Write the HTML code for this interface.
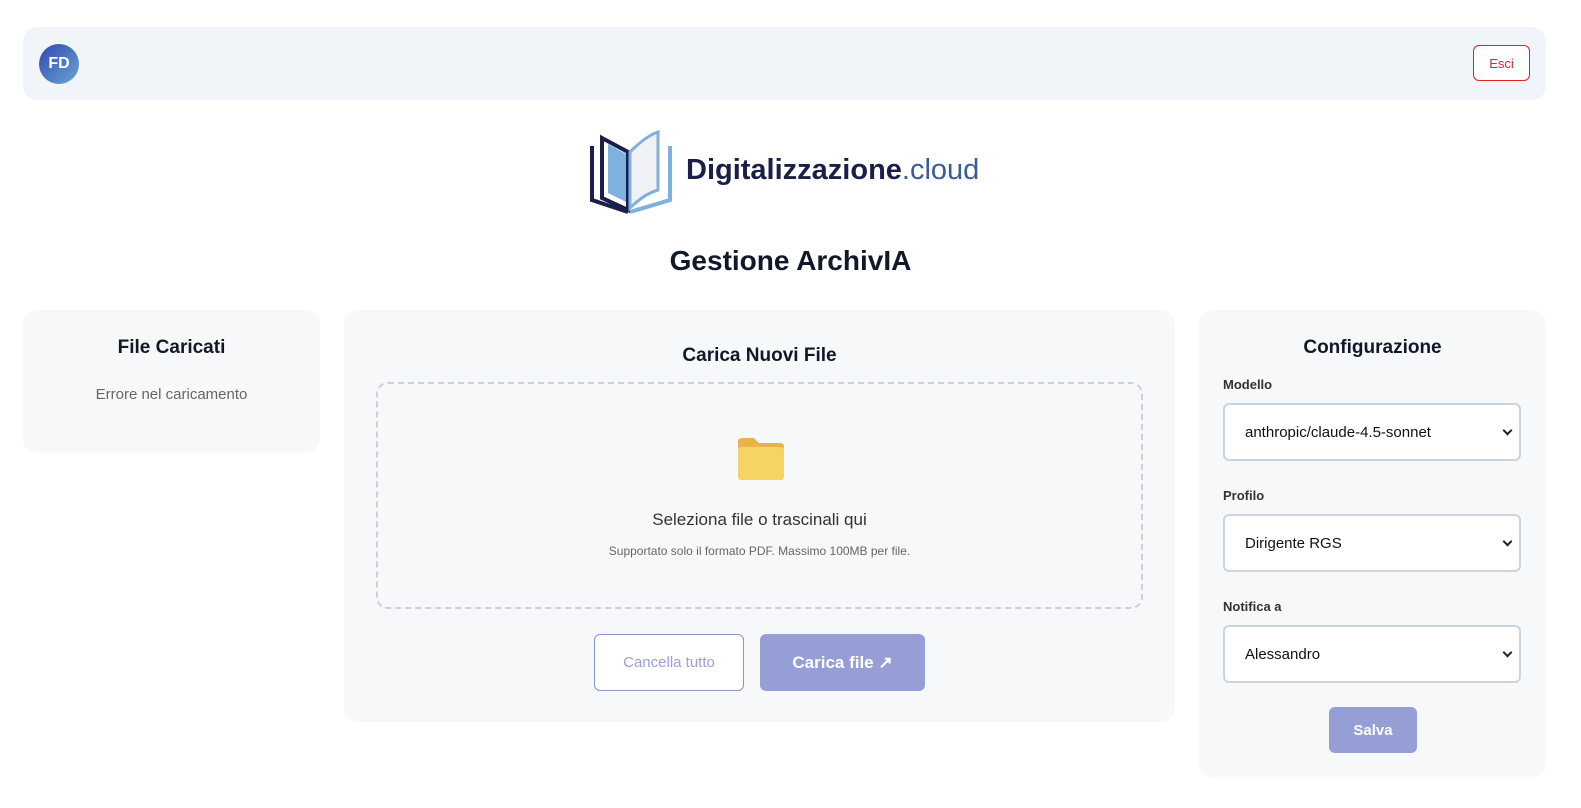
<!DOCTYPE html>
<html><head><meta charset="utf-8"><style>
*{box-sizing:border-box;margin:0;padding:0}
html,body{overflow:hidden}
body{width:1581px;height:808px;background:#fff;font-family:"Liberation Sans",sans-serif;color:#111827;position:relative}
.hdr{position:absolute;left:23px;top:27px;width:1523px;height:73px;background:#f1f5f9;border-radius:14px}
.av{position:absolute;left:16px;top:17px;width:40px;height:40px;border-radius:50%;background:linear-gradient(135deg,#3047b0,#6aa6d6);color:#fff;font-weight:bold;font-size:16px;display:flex;align-items:center;justify-content:center}
.esci{position:absolute;right:16px;top:18px;width:57px;height:36px;border:1px solid #dc2626;border-radius:6px;color:#dc2626;font-size:13px;display:flex;align-items:center;justify-content:center;background:#fff}
.card{position:absolute;background:#f6f8fa;border-radius:14px}
h2{font-size:19px;font-weight:bold;text-align:center}
label{position:absolute;left:24px;font-size:13px;font-weight:bold;color:#333}
.sel{position:absolute;left:24px;width:298px;height:58px;border:2px solid #cbd5e1;border-radius:6px;background:#fff;font-size:15px;padding-left:20px;display:flex;align-items:center;color:#111}
.sel:after{content:"";position:absolute;right:8px;top:22px;width:5px;height:5px;border-right:2px solid #222;border-bottom:2px solid #222;transform:rotate(45deg)}
.btn{position:absolute;border-radius:6px;display:flex;align-items:center;justify-content:center;font-weight:bold}
</style></head><body>
<div class="hdr"><div class="av">FD</div><div class="esci">Esci</div></div>
<svg style="position:absolute;left:588px;top:128px" width="86" height="86" viewBox="0 0 86 86">
<path d="M14 10 L40 24 L40 82 L14 70 Z" fill="#fff" stroke="#1a1f4a" stroke-width="4"/>
<path d="M20 16 L38 26 L38 74 L20 65 Z" fill="#7fb1e0"/>
<path d="M4 18 L4 72 L40 84" fill="none" stroke="#1a1f4a" stroke-width="4"/>
<path d="M42 24 Q58 8 70 4 L70 62 Q56 66 42 80 Z" fill="#f0f2f5" stroke="#7fb1e0" stroke-width="3"/>
<path d="M42 84 L82 72 L82 18" fill="none" stroke="#7fb1e0" stroke-width="4"/>
</svg>
<div style="position:absolute;left:686px;top:154px;font-size:29px;color:#1a1f4a;font-weight:bold">Digitalizzazione<span style="font-weight:normal;color:#3a5a9a">.cloud</span></div>
<div style="position:absolute;left:0;width:1581px;top:245px;text-align:center;font-size:28px;font-weight:bold">Gestione ArchivIA</div>
<div class="card" style="left:23px;top:310px;width:297px;height:143px">
<h2 style="margin-top:27px">File Caricati</h2>
<div style="text-align:center;margin-top:27px;font-size:15px;color:#666">Errore nel caricamento</div></div>
<div class="card" style="left:344px;top:310px;width:831px;height:412px">
<h2 style="margin-top:35px">Carica Nuovi File</h2>
<div style="position:absolute;left:32px;top:72px;width:767px;height:227px;border:2px dashed #cbd0dc;border-radius:12px">
<svg style="position:absolute;left:358px;top:52px" width="50" height="46" viewBox="0 0 50 46"><path d="M2 6 Q2 2 6 2 L18 2 L23 7 L44 7 Q48 7 48 11 L48 14 L2 14Z" fill="#e9b34a"/><rect x="2" y="11" width="46" height="33" rx="3" fill="#f5d466"/></svg>
<div style="position:absolute;top:126px;width:100%;text-align:center;font-size:17px;color:#333">Seleziona file o trascinali qui</div>
<div style="position:absolute;top:160px;width:100%;text-align:center;font-size:12px;color:#666">Supportato solo il formato PDF. Massimo 100MB per file.</div></div>
<div class="btn" style="left:250px;top:324px;width:150px;height:57px;border:1px solid #8b93d1;background:#fff;color:#9aa0d8;font-size:15px;font-weight:normal">Cancella tutto</div>
<div class="btn" style="left:416px;top:324px;width:165px;height:57px;background:#959fd6;color:#fff;font-size:17px">Carica file ↗</div></div>
<div class="card" style="left:1199px;top:310px;width:347px;height:467px">
<h2 style="margin-top:27px">Configurazione</h2>
<label style="top:67px">Modello</label><div class="sel" style="top:93px">anthropic/claude-4.5-sonnet</div>
<label style="top:178px">Profilo</label><div class="sel" style="top:204px">Dirigente RGS</div>
<label style="top:289px">Notifica a</label><div class="sel" style="top:315px">Alessandro</div>
<div class="btn" style="left:130px;top:397px;width:88px;height:46px;background:#959fd6;color:#fff;font-size:15px">Salva</div></div>
</body></html>
